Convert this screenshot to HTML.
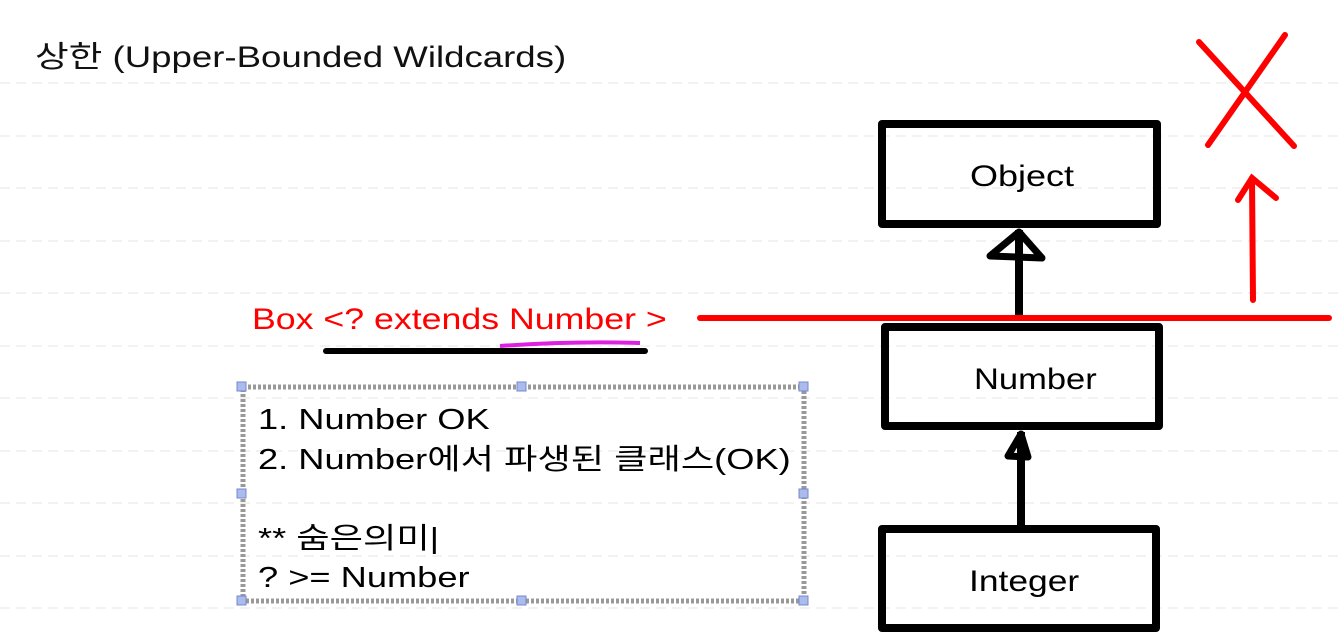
<!DOCTYPE html>
<html><head><meta charset="utf-8"><style>
body{margin:0;width:1340px;height:642px;background:#fff;overflow:hidden;position:relative;font-family:"Liberation Sans","Noto Sans CJK KR",sans-serif}
.t{position:absolute;white-space:nowrap;transform-origin:0 0}
</style></head><body>
<svg width="1340" height="642" style="position:absolute;left:0;top:0">
<g stroke="#e4e4e4" stroke-width="1" stroke-dasharray="10,6">
<line x1="0" y1="83" x2="1340" y2="83"/><line x1="0" y1="136" x2="1340" y2="136"/><line x1="0" y1="188" x2="1340" y2="188"/><line x1="0" y1="241" x2="1340" y2="241"/><line x1="0" y1="293" x2="1340" y2="293"/><line x1="0" y1="346" x2="1340" y2="346"/><line x1="0" y1="398" x2="1340" y2="398"/><line x1="0" y1="451" x2="1340" y2="451"/><line x1="0" y1="503" x2="1340" y2="503"/><line x1="0" y1="556" x2="1340" y2="556"/><line x1="0" y1="608" x2="1340" y2="608"/>
</g>
<g fill="none" stroke="#000" stroke-width="8" stroke-linejoin="round">
<rect x="882" y="124" width="275" height="100"/>
<rect x="885" y="327" width="274" height="99"/>
<rect x="882" y="529" width="274" height="99"/>
<line x1="1019" y1="230" x2="1019" y2="318"/>
<path d="M1019 232 L990 256 L1042 258 Z" stroke-width="7"/>
<line x1="1021" y1="432" x2="1021" y2="525"/>
<path d="M1021 434 L1008 456 L1028 457 Z" stroke-width="7"/>
</g>
<g stroke="#f00" stroke-width="6" stroke-linecap="round" fill="none">
<line x1="700" y1="318" x2="1329" y2="318"/>
<line x1="1199" y1="42" x2="1294" y2="146"/>
<line x1="1285" y1="35" x2="1208" y2="145"/>
<line x1="1253" y1="300" x2="1252" y2="178"/>
<path d="M1238 200 L1252 178 L1276 198"/>
</g>
<line x1="326" y1="351" x2="645" y2="351" stroke="#000" stroke-width="6" stroke-linecap="round"/>
<path d="M500 346 Q570 341 640 343" stroke="#e020e0" stroke-width="4" fill="none"/>
<rect x="243" y="387" width="561" height="214" fill="none" stroke="#999" stroke-width="5" stroke-dasharray="3,2"/>
<g fill="#aabbee" stroke="#7788cc" stroke-width="1">
<rect x="237" y="382" width="9" height="9"/><rect x="517" y="382" width="9" height="9"/><rect x="799" y="382" width="9" height="9"/>
<rect x="237" y="489" width="9" height="9"/><rect x="799" y="489" width="9" height="9"/>
<rect x="237" y="596" width="9" height="9"/><rect x="517" y="596" width="9" height="9"/><rect x="799" y="596" width="9" height="9"/>
</g>
</svg>
<div class="t" style="left:35px;top:32px;font-size:30px;color:#111;transform:scaleX(1.22)">상한 (Upper-Bounded Wildcards)</div>
<div class="t" style="left:970px;top:160px;font-size:30px;transform:scaleX(1.2)">Object</div>
<div class="t" style="left:974px;top:363px;font-size:30px;transform:scaleX(1.15)">Number</div>
<div class="t" style="left:969px;top:565px;font-size:30px;transform:scaleX(1.18)">Integer</div>
<div class="t" style="left:252px;top:303px;font-size:30px;color:#f00;transform:scaleX(1.19)">Box &lt;? extends Number &gt;</div>
<div class="t" style="left:258px;top:401px;font-size:29px;line-height:39.5px;transform:scaleX(1.25)">1. Number OK<br>2. Number에서 파생된 클래스(OK)<br><br>** 숨은의미|<br>? &gt;= Number</div>
</body></html>
